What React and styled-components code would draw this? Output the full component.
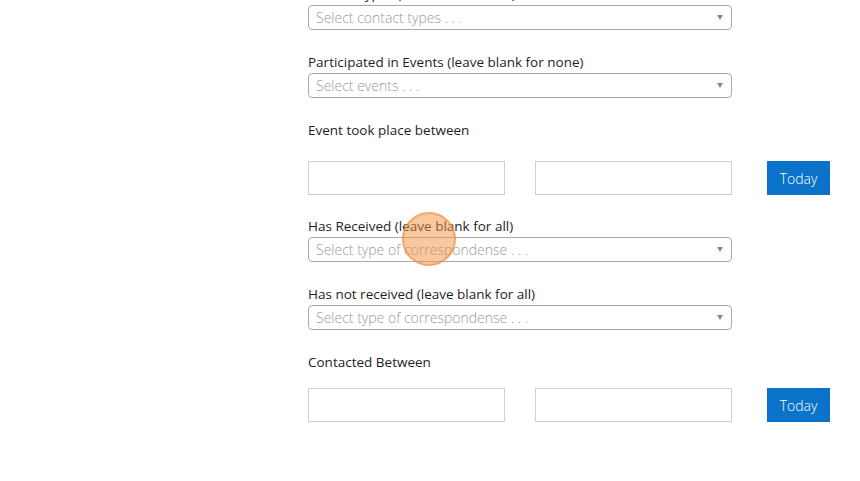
import React from 'react';
import styled, { createGlobalStyle } from 'styled-components';

const Global = createGlobalStyle`
  html, body {
    margin: 0;
    background: #fff;
  }
  body {
    font-family: "Open Sans", "Liberation Sans", sans-serif;
    color: #222;
    overflow: hidden;
  }
`;

const Page = styled.div`
  position: relative;
  width: 860px;
  height: 481px;
  overflow: hidden;
`;

const Form = styled.form`
  display: flex;
  flex-direction: column;
  width: 424px;
  margin: -16px 0 0 308px;
`;

const Group = styled.div`
  display: flex;
  flex-direction: column;
  margin-bottom: ${({ $space = 22 }) => $space}px;
`;

const Label = styled.label`
  font-size: 13.5px;
  line-height: 20px;
  margin-bottom: ${({ $gap }) => $gap}px;
  color: #1e1e1e;
`;

const SelectBox = styled.div`
  box-sizing: border-box;
  height: 25px;
  border: 1px solid #a9a9a9;
  border-radius: 4px;
  display: flex;
  align-items: center;
  justify-content: space-between;
  padding: 0 8px 0 7px;
  font-size: 14px;
  font-weight: 300;
  color: #9a9a9a;
`;

const Caret = styled.span`
  width: 0;
  height: 0;
  border-left: 3.5px solid transparent;
  border-right: 3.5px solid transparent;
  border-top: 5px solid #888;
`;

const DateRow = styled.div`
  display: flex;
  align-items: stretch;
  width: 522px;
`;

const DateInput = styled.input`
  box-sizing: border-box;
  width: 197px;
  height: 34px;
  border: 1px solid #cfcfcf;
  border-radius: 0;
  padding: 0 8px;
  margin-right: ${({ $after }) => $after}px;
  font: inherit;
  outline: none;
`;

const TodayButton = styled.button`
  box-sizing: border-box;
  width: 63px;
  height: 34px;
  border: none;
  background: #0a72c9;
  color: #fff;
  font-family: "Open Sans", "Liberation Sans", sans-serif;
  font-size: 14px;
  font-weight: 300;
  padding: 0;
  cursor: pointer;
`;

const ClickMark = styled.div`
  position: absolute;
  left: 402px;
  top: 212px;
  width: 54px;
  height: 54px;
  box-sizing: border-box;
  border-radius: 50%;
  background: rgba(242, 145, 65, 0.5);
  border: 2px solid rgba(240, 140, 60, 0.55);
  pointer-events: none;
`;

const Select = ({ label, placeholder }) => (
  <Group>
    <Label $gap={1}>{label}</Label>
    <SelectBox>
      <span>{placeholder}</span>
      <Caret />
    </SelectBox>
  </Group>
);

const Between = ({ label, gap, space }) => (
  <Group $space={space}>
    <Label $gap={gap}>{label}</Label>
    <DateRow>
      <DateInput $after={30} />
      <DateInput $after={35} />
      <TodayButton type="button">Today</TodayButton>
    </DateRow>
  </Group>
);

export default function App() {
  return (
    <Page>
      <Global />
      <Form>
        <Select label="Contact types (leave blank for all)" placeholder="Select contact types . . ." />
        <Select label="Participated in Events (leave blank for none)" placeholder="Select events . . ." />
        <Between label="Event took place between" gap={21} space={21} />
        <Select label="Has Received (leave blank for all)" placeholder="Select type of correspondense . . ." />
        <Select label="Has not received (leave blank for all)" placeholder="Select type of correspondense . . ." />
        <Between label="Contacted Between" gap={16} />
      </Form>
      <ClickMark />
    </Page>
  );
}
